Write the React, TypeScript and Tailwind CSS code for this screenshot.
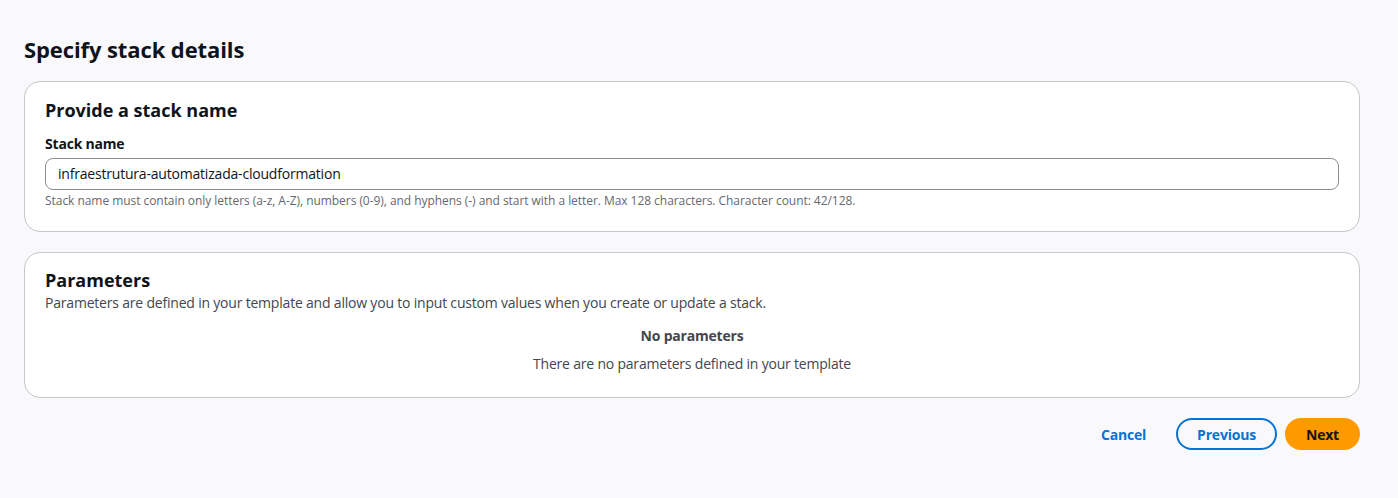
export default function App() {
  return (
    <div className="min-h-[498px] w-full bg-[#f9f9fb] pl-6 pr-[38px] pt-[34px] text-[#0f141a]" style={{ fontFamily: '"Open Sans", "Noto Sans", sans-serif' }}>
      <h1 className="text-[22px] font-bold leading-[30px] tracking-[-0.1px]">Specify stack details</h1>
      <div className="mt-[17px] rounded-2xl border border-[#c6c6cd] bg-white px-5 pb-[22px] pt-[15px]">
        <h2 className="text-[18px] font-bold leading-[26px]">Provide a stack name</h2>
        <div className="mt-[12px] text-[14px] font-bold leading-[18px] tracking-[-0.2px]">Stack name</div>
        <div className="mt-[5px] flex h-8 items-center rounded-lg border border-[#8c8c94] px-3 text-[14px] leading-5 tracking-[-0.2px]">infraestrutura-automatizada-cloudformation</div>
        <div className="mt-[3px] text-[12px] leading-[16px] text-[#656871] tracking-[-0.05px]">Stack name must contain only letters (a-z, A-Z), numbers (0-9), and hyphens (-) and start with a letter. Max 128 characters. Character count: 42/128.</div>
      </div>
      <div className="mt-5 rounded-2xl border border-[#c6c6cd] bg-white px-5 pb-[23px] pt-[14px]">
        <h2 className="text-[18px] font-bold leading-[26px]">Parameters</h2>
        <div className="text-[14px] leading-5 tracking-[-0.2px] text-[#424650]">Parameters are defined in your template and allow you to input custom values when you create or update a stack.</div>
        <div className="mt-[13px] text-center text-[14px] font-bold leading-5 tracking-[-0.2px] text-[#424650]">No parameters</div>
        <div className="mt-2 text-center text-[14px] leading-5 tracking-[-0.2px] text-[#424650]">There are no parameters defined in your template</div>
      </div>
      <div className="mt-5 flex items-center justify-end gap-2">
        <button className="mr-[22px] text-[14px] font-bold tracking-[-0.2px] text-[#0972d3]">Cancel</button>
        <button className="h-8 rounded-[20px] border-2 border-[#0972d3] px-[19px] text-[14px] font-bold tracking-[-0.2px] text-[#0972d3]">Previous</button>
        <button className="h-8 rounded-[20px] bg-[#ff9900] px-[21px] text-[14px] font-bold tracking-[-0.2px] text-[#0f141a]">Next</button>
      </div>
    </div>
  );
}
